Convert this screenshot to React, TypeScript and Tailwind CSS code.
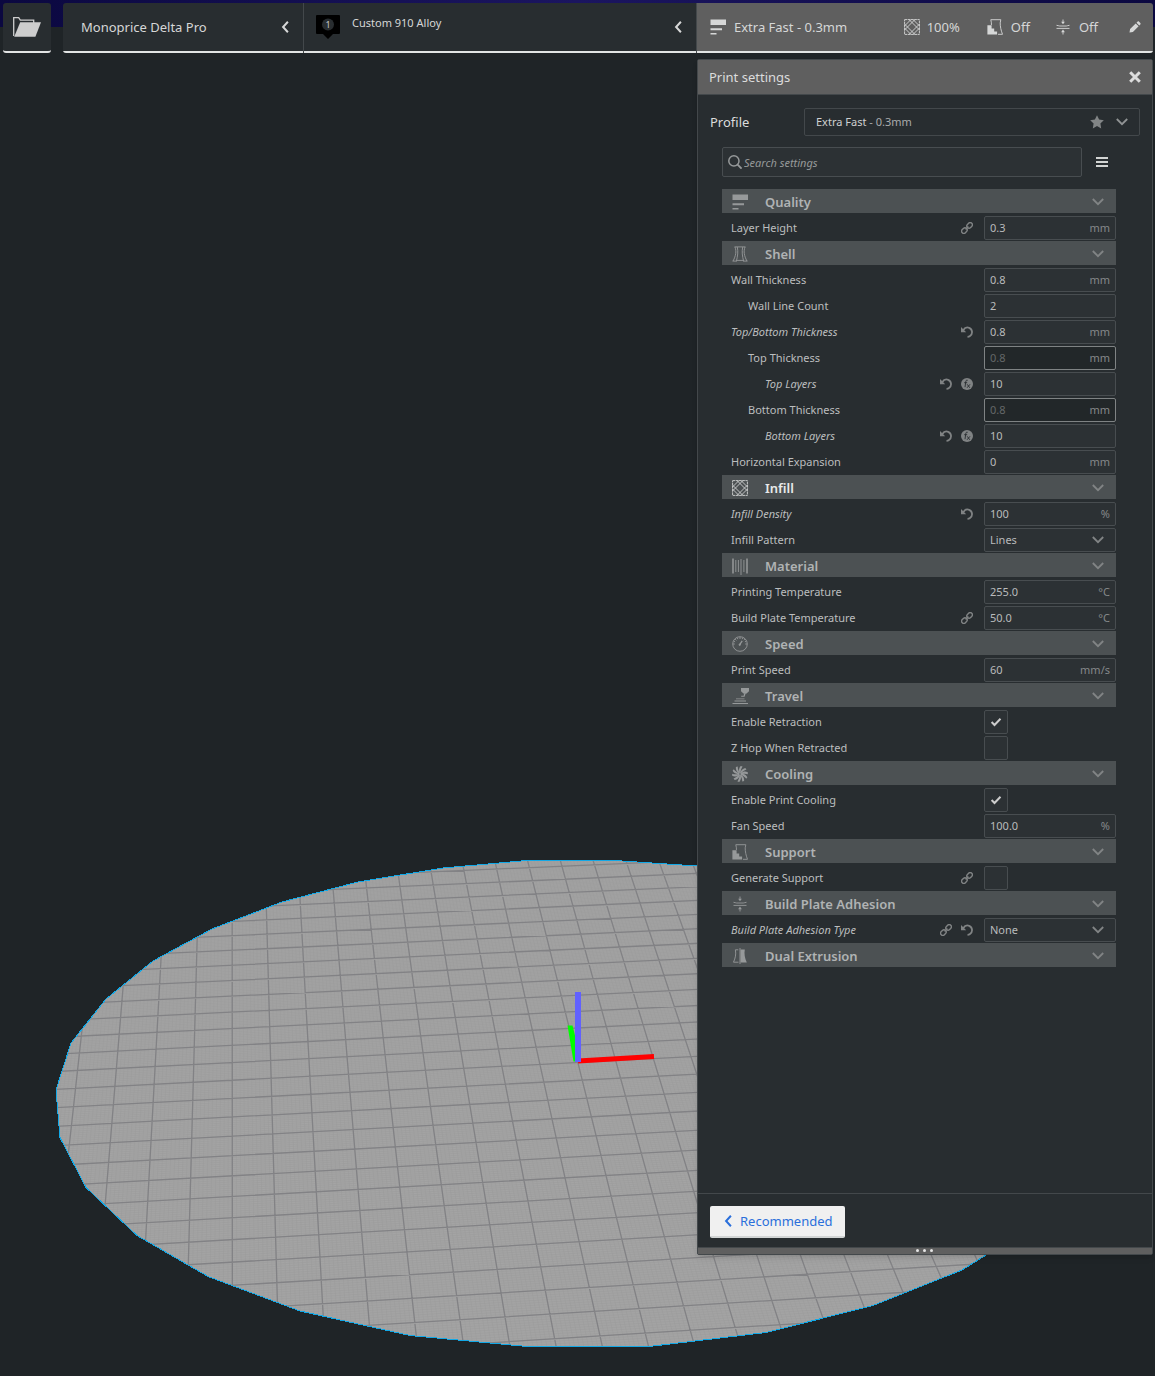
import { useId } from "react";
import type { ReactNode } from "react";

type IconProps = { className?: string };

/* ---------- icons ---------- */

function ChevronDown({ className = "" }: IconProps) {
  return (
    <svg viewBox="0 0 12 8" className={`h-2 w-3 ${className}`} fill="none" stroke="currentColor" strokeWidth="1.8" aria-hidden="true">
      <path d="M0.8 1l5.2 5.2L11.2 1" />
    </svg>
  );
}

function ChevronLeft({ className = "" }: IconProps) {
  return (
    <svg viewBox="0 0 8 12" className={`h-3 w-2 ${className}`} fill="none" stroke="currentColor" strokeWidth="2" aria-hidden="true">
      <path d="M6.900 0.800L2.100 6l4.800 5.200" />
    </svg>
  );
}

function FolderIcon() {
  return (
    <svg viewBox="0 0 28 20" className="h-5 w-7" aria-hidden="true">
      <path d="M0.7 19V0.7h5l1.6 2.4h13.4V6" fill="none" stroke="#cdcdcd" strokeWidth="1.3" />
      <path d="M7.2 5.2H28L22.4 19.7H1.2z" fill="#cdcdcd" />
    </svg>
  );
}

function LayersIcon({ className = "" }: IconProps) {
  return (
    <svg viewBox="0 0 16 16" className={`size-4 ${className}`} fill="currentColor" aria-hidden="true">
      <path d="M0.500 0.500h15.500v5.500H0.500zM0.500 9.200h11.500v2H0.500zM0.500 14h6v1.500h-6z" />
    </svg>
  );
}

function ShellIcon({ className = "" }: IconProps) {
  return (
    <svg viewBox="0 0 16 16" className={`size-4 ${className}`} fill="none" stroke="currentColor" strokeWidth="0.9" aria-hidden="true">
      <path d="M2.500 0.900h11M0.500 15.100h4.500M11 15.100h4.500M3 1c1.600 4.500 0.900 8.500-1.900 14M5.300 1c1 4.800 0.400 9-0.900 14M13 1c-1.600 4.500-0.900 8.500 1.900 14M10.700 1c-1 4.800-0.400 9 0.900 14M5 14.400h6" />
    </svg>
  );
}

function InfillIcon({ className = "" }: IconProps) {
  return (
    <svg viewBox="0 0 16 16" className={`size-4 ${className}`} fill="none" stroke="currentColor" strokeWidth="0.9" aria-hidden="true">
      <path d="M0.600 0.600h14.800v14.800H0.600z" strokeDasharray="2.700 0.500" />
      <path d="M0.600 10.900L10.900 0.600M0.600 6.900L6.900 0.600M5.100 15.400L15.400 5.100M9.100 15.400l6.300-6.300M5.100 0.600l10.300 10.300M9.100 0.600l6.300 6.300M0.600 5.100l10.300 10.300M0.600 9.100l6.300 6.300" />
    </svg>
  );
}

function MaterialIcon({ className = "" }: IconProps) {
  return (
    <svg viewBox="0 0 16 17" className={`h-[17px] w-4 ${className}`} fill="none" stroke="currentColor" aria-hidden="true">
      <path d="M1 0.500v15M15 0.500v15" strokeWidth="1.500" />
      <path d="M3.800 2v12M6.400 2v12M9 1v16M11.900 2v12" strokeWidth="0.900" />
    </svg>
  );
}

function SpeedIcon({ className = "" }: IconProps) {
  return (
    <svg viewBox="0 0 16 16" className={`size-4 ${className}`} fill="none" stroke="currentColor" strokeWidth="0.900" aria-hidden="true">
      <circle cx="8" cy="8" r="7.300" />
      <path d="M8 1v2M3.200 3.200l1.200 1.200M1 8h1.800M13.200 8H15M12.800 3.200l-1 1M5.300 1.700l0.500 1.500M1.700 5.300l1.400 0.500M10.700 1.700l-0.500 1.500M14.300 5.300l-1.400 0.500" />
      <path d="M10.200 4.800L7.700 8.600" strokeWidth="1.300" />
      <circle cx="7.700" cy="8.800" r="0.700" fill="currentColor" />
    </svg>
  );
}

function TravelIcon({ className = "" }: IconProps) {
  return (
    <svg viewBox="0 0 16 16" className={`h-4 w-4 overflow-visible ${className}`} fill="currentColor" aria-hidden="true">
      <path d="M9 0h8v3.200l-2.800 2.500h-2.400L9 3.200z" />
      <path d="M13.600 5.500l-1 3.200H9.200v-0.900h2.500l0.300-2.300zM4 10.400h8.500v0.900H4zM2.500 12.600H14v1H2.500zM0.500 15h15.500v1H0.500z" />
    </svg>
  );
}

function CoolingIcon({ className = "" }: IconProps) {
  const blades = [0, 36, 72, 108, 144, 180, 216, 252, 288, 324];
  return (
    <svg viewBox="0 0 16 16" className={`size-4 ${className}`} fill="currentColor" aria-hidden="true">
      {blades.map((angle) => (
        <path key={angle} transform={`rotate(${angle} 8 8)`} d="M7.600 7.200C6.500 4.500 6.900 2 8.700 0l1.900 0.600C9.300 2.400 8.600 4.500 8.500 7.200z" />
      ))}
    </svg>
  );
}

function SupportIcon({ className = "" }: IconProps) {
  return (
    <svg viewBox="0 0 16 16" className={`size-4 ${className}`} aria-hidden="true">
      <path d="M0.400 6.300h4.200v3.300h2.600v2.800h2.900v3.200H0.400z" fill="currentColor" />
      <path d="M4.400 6V3.800L3.800 0.700h10l-0.600 3.200c0 4 0.700 7 2.300 11.400H11" fill="none" stroke="currentColor" strokeWidth="0.900" />
    </svg>
  );
}

function AdhesionIcon({ className = "" }: IconProps) {
  return (
    <svg viewBox="0 0 16 16" className={`size-4 ${className}`} fill="none" stroke="currentColor" strokeWidth="0.900" aria-hidden="true">
      <path d="M1.500 6.300c1.500 0 2 0.700 3.200 0.700h6.600c1.200 0 1.700-0.700 3.200-0.700M1.500 9.400h13M8 0.500v3M8 12.500v3" />
      <path d="M6.100 2.700h3.800L8 5.300zM6.100 13.200h3.800L8 10.600z" fill="currentColor" stroke="none" />
    </svg>
  );
}

function DualIcon({ className = "" }: IconProps) {
  return (
    <svg viewBox="0 0 16 16" className={`size-4 ${className}`} aria-hidden="true">
      <path d="M8.500 1.400h4.300c-0.800 4.600 0 8.400 2 13.200H8.500z" fill="currentColor" />
      <path d="M6.300 1.800H3.400c0.800 4.600 0 8.200-1.900 12.400h5M8 0v16" fill="none" stroke="currentColor" strokeWidth="0.900" />
    </svg>
  );
}

function LinkIcon() {
  return (
    <svg viewBox="0 0 12 12" className="size-3" fill="none" stroke="currentColor" strokeWidth="1.400" aria-hidden="true">
      <rect x="-3" y="-2.200" width="6" height="4.400" rx="2.200" transform="translate(3.400 8.600) rotate(-45)" />
      <rect x="-3" y="-2.200" width="6" height="4.400" rx="2.200" transform="translate(8.600 3.400) rotate(-45)" />
      <path d="M4.600 7.400l2.800-2.800" />
    </svg>
  );
}

function ResetIcon() {
  return (
    <svg viewBox="0 0 12 12" className="size-3" aria-hidden="true">
      <path d="M2.200 4.200C3.600 2 6 1 8.200 1.800c3.400 1.400 3.800 6.200 0.800 8.200c-0.800 0.600-1.700 0.800-2.500 0.800" fill="none" stroke="currentColor" strokeWidth="1.800" />
      <path d="M0 1v5.200h5.200z" fill="currentColor" />
    </svg>
  );
}

function FormulaIcon() {
  return (
    <svg viewBox="0 0 12 12" className="size-3" aria-hidden="true">
      <circle cx="6" cy="6" r="6" fill="currentColor" />
      <path d="M6.700 2.300c-1.400-0.600-1.800 0.400-2 1.800L4 9.200M3.200 4.700h3M6.200 6.300l2.600 3.500M9 6.300L6 9.800" fill="none" stroke="#282d30" strokeWidth="0.900" />
    </svg>
  );
}

/* ---------- build plate ---------- */

const PLATE =
  "527,860.500 615,860.500 697,866 790,880 900,908 1000,950 1050,1010 1070,1090 1050,1170 1025,1220 986,1255 962,1270 873,1305.500 766,1332.500 649,1346.500 527,1346.500 410,1335.500 300,1311 208,1276.500 137,1235.500 86,1187.500 60,1137.500 56,1090 71,1043 106,999 153,961 212,929 282,902 358,882 443,868";

/* Perspective projection of a grid cell corner (column, row) on to the canvas. */
function project(column: number, row: number): string {
  const u = column / 13;
  const v = row / 19;
  const w = 1 + 0.01808 * u - 0.21666 * v;
  const x = (232.2 + 458.4 * u - 50.2 * v) / w;
  const y = (935.7 - 3.85 * u + 71.1 * v) / w;
  return `${x.toFixed(2)} ${y.toFixed(2)}`;
}

function gridPath(step: number): string {
  const parts: string[] = [];
  for (let n = 0; n * step <= 30; n++) {
    const column = -7 + n * step;
    parts.push(`M${project(column, -7)}L${project(column, 25)}`);
  }
  for (let n = 0; n * step <= 32; n++) {
    const row = -7 + n * step;
    parts.push(`M${project(-7, row)}L${project(23, row)}`);
  }
  return parts.join("");
}

const MAJOR_GRID = gridPath(1);
const MINOR_GRID = gridPath(0.1);

function BuildPlate() {
  return (
    <svg viewBox="0 0 1155 1376" className="absolute top-0 left-0 w-full" role="img" aria-label="Build plate">
      <clipPath id="plate">
        <polygon points={PLATE} />
      </clipPath>
      <g clipPath="url(#plate)">
        <rect y="850" width="1155" height="510" fill="#a4a4a4" />
        <path d={MINOR_GRID} stroke="#8f8f8f" strokeWidth="0.500" opacity="0.400" />
        <path d={MAJOR_GRID} stroke="#828285" strokeWidth="1.300" />
      </g>
      <polygon points={PLATE} fill="none" stroke="#12a8e6" strokeWidth="1" shapeRendering="crispEdges" />
      <path d="M578 1061l76-4.500" stroke="#ff0000" strokeWidth="5" />
      <path d="M567.500 1025.500h5l3 12v24h-2z" fill="#00ff00" />
      <path d="M575 992h6v70h-6z" fill="#6161ff" />
    </svg>
  );
}

/* ---------- settings list ---------- */

type Mark = "link" | "reset" | "formula";

type Setting = {
  label: string;
  kind: "text" | "select" | "check";
  value?: string;
  checked?: boolean;
  unit?: string;
  level?: number;
  edited?: boolean;
  disabled?: boolean;
  marks?: Mark[];
};

type Section = {
  title: string;
  Icon: (props: IconProps) => ReactNode;
  active?: boolean;
  settings: Setting[];
};

const SECTIONS: Section[] = [
  {
    title: "Quality",
    Icon: LayersIcon,
    settings: [{ label: "Layer Height", kind: "text", value: "0.3", unit: "mm", marks: ["link"] }],
  },
  {
    title: "Shell",
    Icon: ShellIcon,
    settings: [
      { label: "Wall Thickness", kind: "text", value: "0.8", unit: "mm" },
      { label: "Wall Line Count", kind: "text", value: "2", level: 1 },
      { label: "Top/Bottom Thickness", kind: "text", value: "0.8", unit: "mm", edited: true, marks: ["reset"] },
      { label: "Top Thickness", kind: "text", value: "0.8", unit: "mm", level: 1, disabled: true },
      { label: "Top Layers", kind: "text", value: "10", level: 2, edited: true, marks: ["reset", "formula"] },
      { label: "Bottom Thickness", kind: "text", value: "0.8", unit: "mm", level: 1, disabled: true },
      { label: "Bottom Layers", kind: "text", value: "10", level: 2, edited: true, marks: ["reset", "formula"] },
      { label: "Horizontal Expansion", kind: "text", value: "0", unit: "mm" },
    ],
  },
  {
    title: "Infill",
    Icon: InfillIcon,
    active: true,
    settings: [
      { label: "Infill Density", kind: "text", value: "100", unit: "%", edited: true, marks: ["reset"] },
      { label: "Infill Pattern", kind: "select", value: "Lines" },
    ],
  },
  {
    title: "Material",
    Icon: MaterialIcon,
    settings: [
      { label: "Printing Temperature", kind: "text", value: "255.0", unit: "°C" },
      { label: "Build Plate Temperature", kind: "text", value: "50.0", unit: "°C", marks: ["link"] },
    ],
  },
  {
    title: "Speed",
    Icon: SpeedIcon,
    settings: [{ label: "Print Speed", kind: "text", value: "60", unit: "mm/s" }],
  },
  {
    title: "Travel",
    Icon: TravelIcon,
    settings: [
      { label: "Enable Retraction", kind: "check", checked: true },
      { label: "Z Hop When Retracted", kind: "check" },
    ],
  },
  {
    title: "Cooling",
    Icon: CoolingIcon,
    settings: [
      { label: "Enable Print Cooling", kind: "check", checked: true },
      { label: "Fan Speed", kind: "text", value: "100.0", unit: "%" },
    ],
  },
  {
    title: "Support",
    Icon: SupportIcon,
    settings: [{ label: "Generate Support", kind: "check", marks: ["link"] }],
  },
  {
    title: "Build Plate Adhesion",
    Icon: AdhesionIcon,
    settings: [
      { label: "Build Plate Adhesion Type", kind: "select", value: "None", edited: true, marks: ["link", "reset"] },
    ],
  },
  { title: "Dual Extrusion", Icon: DualIcon, settings: [] },
];

const MARKS: Record<Mark, { name: string; icon: ReactNode }> = {
  link: { name: "Shared between extruders", icon: <LinkIcon /> },
  reset: { name: "Restore profile value", icon: <ResetIcon /> },
  formula: { name: "Restore calculated value", icon: <FormulaIcon /> },
};

const INDENTS = ["pl-[9px]", "pl-[26px]", "pl-[43px]"];

function SettingControl({ id, setting }: { id: string; setting: Setting }) {
  if (setting.kind === "check") {
    return (
      <div className="w-[132px]">
        <div className="relative size-6">
          <input
            id={id}
            type="checkbox"
            defaultChecked={setting.checked}
            className="peer block size-6 appearance-none rounded-xs border border-[#484d50] bg-[#2c3134]"
          />
          <svg viewBox="0 0 24 24" className="pointer-events-none absolute inset-0 hidden size-6 peer-checked:block" fill="none" stroke="#cccccc" strokeWidth="2" aria-hidden="true">
            <path d="M7.600 12l2.900 3 6-6.300" />
          </svg>
        </div>
      </div>
    );
  }
  if (setting.kind === "select") {
    return (
      <div className="relative w-[132px]">
        <select
          id={id}
          defaultValue={setting.value}
          className="block h-6 w-full appearance-none rounded-xs border border-[#484d50] bg-[#2c3134] pl-[5px] text-[#b9bbbc]"
        >
          <option>{setting.value}</option>
        </select>
        <ChevronDown className="pointer-events-none absolute top-2 right-3 text-[#818485]" />
      </div>
    );
  }
  const frame = setting.disabled ? "border-[#7f8384] bg-[#222729] text-[#646768]" : "border-[#484d50] bg-[#2c3134] text-[#b9bbbc]";
  return (
    <div className={`flex h-6 w-[132px] items-center rounded-xs border px-[5px] ${frame}`}>
      <input id={id} type="text" defaultValue={setting.value} disabled={setting.disabled} className="h-4 w-0 grow bg-transparent leading-4 outline-none" />
      <span className="text-[#85888a]">{setting.unit}</span>
    </div>
  );
}

function SettingRow({ setting }: { setting: Setting }) {
  const id = useId();
  return (
    <div className={`flex h-[26px] items-center ${INDENTS[setting.level ?? 0]}`}>
      <label htmlFor={id} className={`grow ${setting.edited ? "italic" : ""}`}>
        {setting.label}
      </label>
      <div className="mr-[11px] flex gap-[9px] text-[#808384]">
        {setting.marks?.map((mark) => (
          <button key={mark} type="button" aria-label={MARKS[mark].name}>
            {MARKS[mark].icon}
          </button>
        ))}
      </div>
      <SettingControl id={id} setting={setting} />
    </div>
  );
}

function SettingsSection({ section }: { section: Section }) {
  const { Icon } = section;
  return (
    <section>
      <h2 className="h-[26px]">
        <button
          type="button"
          className={`flex h-6 w-full items-center bg-[#4c5153] pt-0.5 pr-3 pl-2.5 text-[13px] font-semibold ${section.active ? "text-[#e8e9e9]" : "text-[#b0b3b4]"}`}
        >
          <span className={`flex w-[33px] ${section.active ? "text-[#cfd1d1]" : "text-[#96999a]"}`}>
            <Icon />
          </span>
          <span className="grow text-left leading-5">{section.title}</span>
          <ChevronDown className="text-[#818485]" />
        </button>
      </h2>
      {section.settings.map((setting) => (
        <SettingRow key={setting.label} setting={setting} />
      ))}
    </section>
  );
}

function PrintSettings() {
  return (
    <aside className="mr-0.5 mt-1.5 flex w-[456px] grow flex-col self-end rounded-xs border border-[#43484b] bg-[#282d30] shadow-md">
      <header className="flex h-[35px] items-center justify-between border-b border-[#43484b] bg-[#5f5f5f] pr-[11px] pl-[11px]">
        <h1 className="text-[#dcdcdc]">Print settings</h1>
        <button type="button" aria-label="Close">
          <svg viewBox="0 0 12 12" className="size-3" stroke="#dcdcdc" strokeWidth="3" aria-hidden="true">
            <path d="M1.200 1.200l9.600 9.600M10.800 1.200l-9.600 9.600" />
          </svg>
        </button>
      </header>

      <div className="mt-[13px] mr-3 ml-3 flex h-7 items-center">
        <span id="profile-label" className="w-[94px] text-[#dcdcdc]">
          Profile
        </span>
        <button
          type="button"
          aria-haspopup="listbox"
          aria-labelledby="profile-label"
          className="flex h-full grow items-center rounded-xs border border-[#43484b] pr-[11px] pl-[11px] text-[11px] text-[#cfd0d0]"
        >
          <span className="grow text-left">
            Extra Fast <span className="text-[#a9abac]">- 0.3mm</span>
          </span>
          <svg viewBox="0 0 14 14" className="mr-3 size-3.5" fill="#828586" aria-hidden="true">
            <path d="M7 0.300l2.100 4.300 4.700 0.700-3.400 3.300 0.800 4.800L7 11.100l-4.200 2.300 0.800-4.800L0.200 5.300l4.700-0.700z" />
          </svg>
          <ChevronDown className="text-[#909394]" />
        </button>
      </div>

      <div className="mt-[11px] mr-9 ml-6 flex h-[30px] items-center">
        <label className="flex h-full grow items-center rounded-xs border border-[#484d50] bg-[#2c3134] pl-[5px]">
          <svg viewBox="0 0 14 14" className="size-3.5" fill="none" stroke="#96999a" aria-hidden="true">
            <circle cx="5.900" cy="5.900" r="5.100" strokeWidth="1.500" />
            <path d="M9.600 9.600l4 4" strokeWidth="1.900" />
          </svg>
          <input
            type="search"
            aria-label="Search settings"
            placeholder="Search settings"
            className="h-full grow bg-transparent pl-0.5 text-[11px] outline-none placeholder:text-[#969999] placeholder:italic"
          />
        </label>
        <button type="button" aria-label="Setting visibility" className="mr-2 ml-3.5 text-[#d2d4d3]">
          <svg viewBox="0 0 12 10" className="h-2.5 w-3" fill="currentColor" aria-hidden="true">
            <path d="M0 0h12v2H0zM0 4h12v2H0zM0 8h12v2H0z" />
          </svg>
        </button>
      </div>

      <div className="mt-3 mr-9 ml-6 grow text-[11px] leading-4 text-[#bcbebf]">
        {SECTIONS.map((section) => (
          <SettingsSection key={section.title} section={section} />
        ))}
      </div>

      <footer className="flex border-t border-[#43484b] px-3 pt-3 pb-[9px]">
        <button
          type="button"
          className="flex h-8 items-center rounded-xs border-b-2 border-[#d2d5d5] bg-[#f0f0f0] pr-3 pl-3.5 text-[#2a6fdb]"
        >
          <ChevronLeft className="mr-2" />
          Recommended
        </button>
      </footer>
      <div className="flex h-[7px] items-start justify-center gap-1 border-t border-[#43484b] bg-[#5f5f5f] pt-px pr-0.5">
        <i className="size-[3px] rounded-full bg-[#e6e6e6]" />
        <i className="size-[3px] rounded-full bg-[#e6e6e6]" />
        <i className="size-[3px] rounded-full bg-[#e6e6e6]" />
      </div>
    </aside>
  );
}

/* ---------- top bar ---------- */

function TopBar() {
  return (
    <nav className="flex h-[50px] gap-3 pr-0.5 pl-[3px] text-[#d6d7d7]">
      <button
        type="button"
        aria-label="Open file"
        className="flex w-12 items-center justify-center rounded-[3px] border-b-2 border-[#e2e4e4] bg-[#282d30]"
      >
        <FolderIcon />
      </button>
      <div className="flex grow overflow-hidden rounded-[3px]">
        <button type="button" className="flex w-60 items-center justify-between border-b-2 border-[#e2e4e4] bg-[#282d30] pr-3.5 pl-[18px]">
          Monoprice Delta Pro
          <ChevronLeft />
        </button>
        <div className="w-px bg-[#43484b]" />
        <button type="button" className="flex grow items-center border-b-2 border-[#e2e4e4] bg-[#282d30] pr-3.5 pl-3 text-[11px]">
          <svg viewBox="0 0 24 24" className="mr-3 size-6" aria-hidden="true">
            <path d="M1 0h22a1 1 0 0 1 1 1v17a1 1 0 0 1-1 1h-6l-5 5-5-5H1a1 1 0 0 1-1-1V1a1 1 0 0 1 1-1z" fill="#000000" />
            <circle cx="12" cy="9.500" r="6" fill="#282d30" />
            <text x="12" y="13" textAnchor="middle" fontSize="9" fill="#c8caca">
              1
            </text>
          </svg>
          <span className="grow pb-2 text-left">Custom 910 Alloy</span>
          <ChevronLeft />
        </button>
        <div className="w-px bg-[#43484b]" />
        <button type="button" className="flex w-[456px] items-center border-b-2 border-[#e2e4e4] bg-[#5f5f5f] pr-3 pl-[13px]">
          <LayersIcon className="mr-2" />
          <span className="grow text-left">Extra Fast - 0.3mm</span>
          <InfillIcon className="mr-[7px]" />
          100%
          <SupportIcon className="mr-2 ml-[27px]" />
          Off
          <AdhesionIcon className="mr-2 ml-[25px]" />
          Off
          <svg viewBox="0 0 12 12" className="ml-[31px] size-3" fill="currentColor" aria-hidden="true">
            <path d="M0.500 11.500l0.600-3.400 5.600-5.700 2.900 2.900-5.700 5.600zM7.500 1.700l1-1c0.500-0.500 1.100-0.500 1.600 0l1.200 1.200c0.500 0.500 0.500 1.100 0 1.600l-1 1z" />
          </svg>
        </button>
      </div>
    </nav>
  );
}

export default function App() {
  return (
    <main className="relative flex min-h-screen flex-col overflow-hidden bg-[#1f2427] pb-[121px] font-['Noto_Sans',sans-serif] text-[13px] leading-5">
      <div className="absolute inset-x-0 top-0 h-[27px] bg-linear-to-r from-[#0b0840] via-[#1b1560] to-[#0b0840]" />
      <BuildPlate />
      <div className="relative flex grow flex-col pt-[3px]">
        <TopBar />
        <PrintSettings />
      </div>
    </main>
  );
}
